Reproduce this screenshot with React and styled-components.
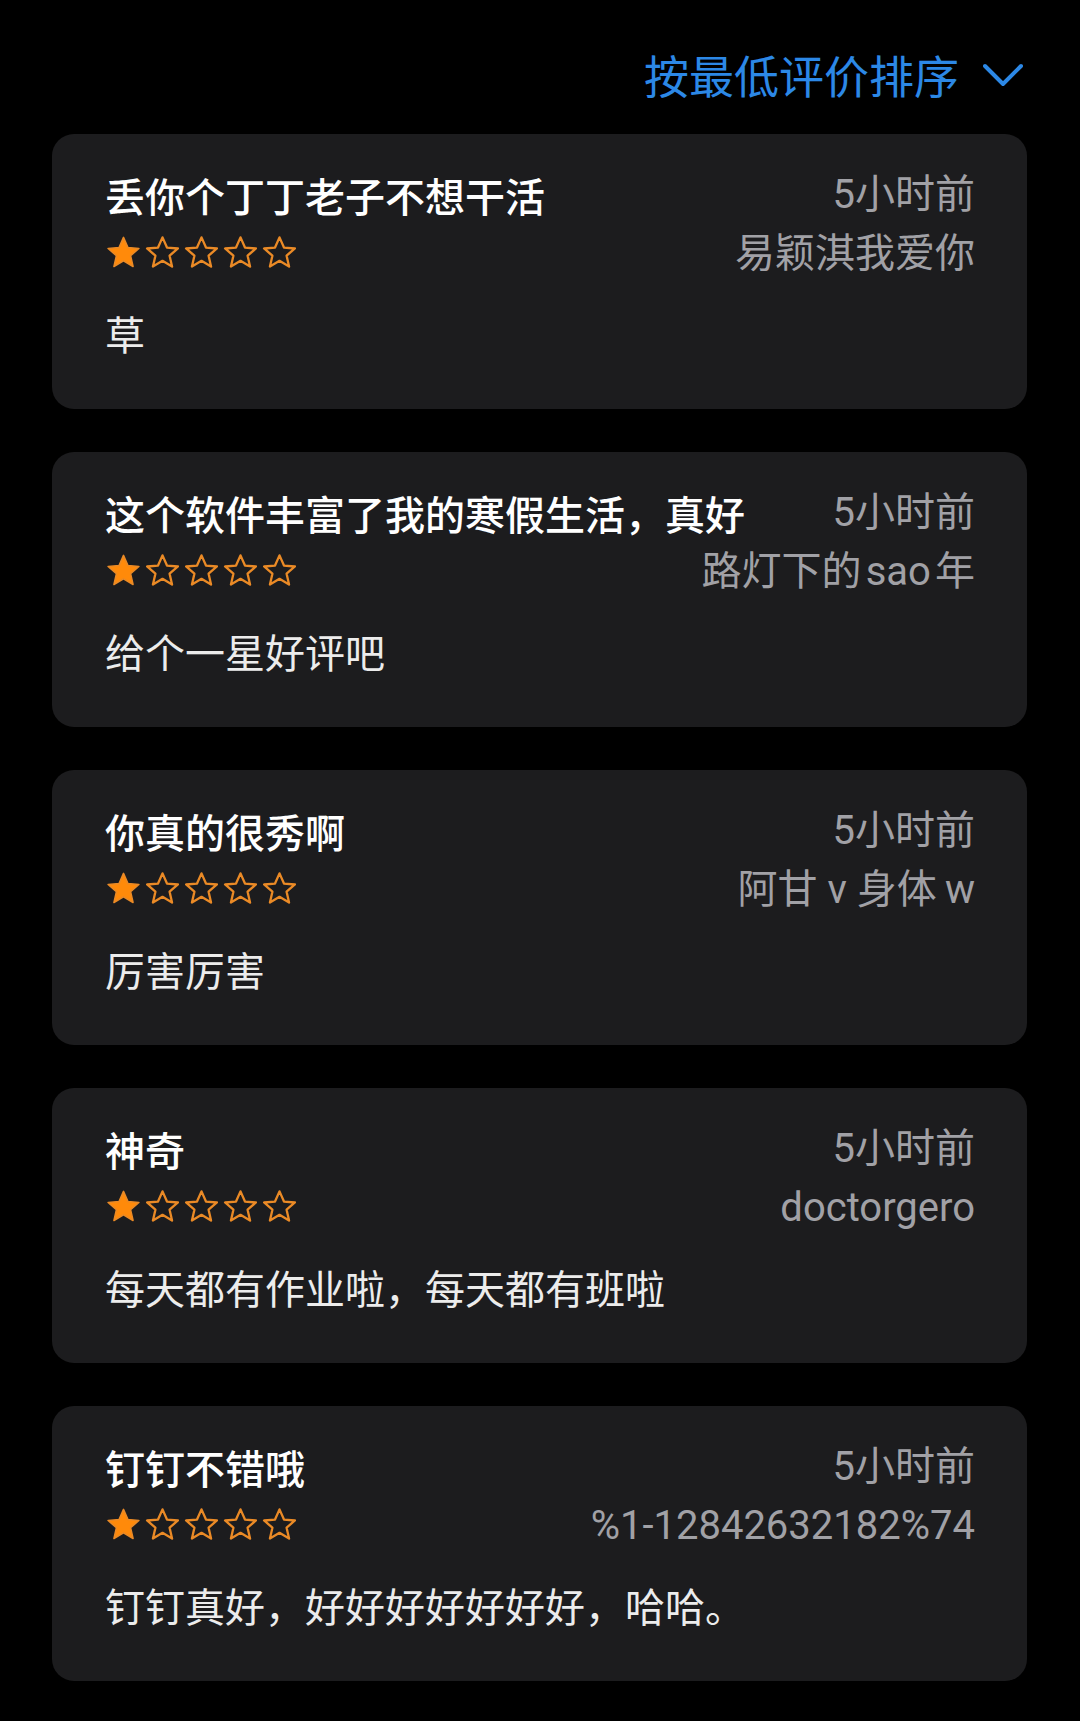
import React from "react";
import styled, { createGlobalStyle } from "styled-components";

const Global = createGlobalStyle`
  html, body { margin: 0; padding: 0; background: #000; }
  body { font-family: Roboto, "Noto Sans CJK SC", sans-serif; -webkit-font-smoothing: antialiased; }
`;

const Page = styled.div`
  background: #000;
  min-height: 1721px;
  padding: 53px 53px 0 52px;
  box-sizing: border-box;
  display: flex;
  flex-direction: column;
`;

const SortBar = styled.div`
  display: flex;
  justify-content: flex-end;
  align-items: center;
  gap: 24px;
  height: 44px;
  margin-bottom: 37px;
  padding-right: 4px;
  color: #2c88e6;
  font-family: "Noto Sans CJK SC", sans-serif;
  font-size: 45px;
  line-height: 44px;
`;

const List = styled.div`
  display: flex;
  flex-direction: column;
  gap: 43px;
`;

const Card = styled.div`
  background: #1c1c1e;
  border-radius: 22px;
  padding: 37px 52px 51px 53px;
  height: 275px;
  box-sizing: border-box;
`;

const Head = styled.div`
  display: grid;
  grid-template-columns: minmax(0, 1fr) auto;
  row-gap: 11px;
  align-items: center;
`;

const Title = styled.div`
  color: #fff;
  font-family: "Noto Sans CJK SC", sans-serif;
  font-weight: 500;
  font-size: 40px;
  line-height: 48px;
  white-space: nowrap;
`;

const Meta = styled.div`
  color: #a1a1a6;
  font-family: Roboto, "Noto Sans CJK SC", sans-serif;
  font-size: 40px;
  line-height: 48px;
  text-align: right;
  white-space: nowrap;
`;

const Stars = styled.div`
  display: flex;
  gap: 2px;
  height: 36px;
  align-items: center;
  margin-top: -4px;
`;

const Body = styled.div`
  margin-top: 31px;
  color: #ececec;
  font-family: "Noto Sans CJK SC", sans-serif;
  font-size: 40px;
  line-height: 48px;
  white-space: nowrap;
`;

const Star = ({ filled }) => (
  <svg width="37" height="37" viewBox="0 0 24 24">
    <path
      d="M12 2.2l2.9 6.6 7.1.6-5.4 4.7 1.6 7-6.2-3.7-6.2 3.7 1.6-7L2 9.4l7.1-.6z"
      fill={filled ? "#ff8a0a" : "none"}
      stroke="#ea8a26"
      strokeWidth={filled ? 1 : 1.5}
      strokeLinejoin="round"
    />
  </svg>
);

const Chevron = () => (
  <svg width="40" height="24" viewBox="0 0 40 24">
    <polyline points="2,3 20,21 38,3" fill="none" stroke="#2c88e6" strokeWidth="4" strokeLinecap="round" strokeLinejoin="round" />
  </svg>
);

const reviews = [
  { title: "丢你个丁丁老子不想干活", user: "易颖淇我爱你", body: "草" },
  { title: "这个软件丰富了我的寒假生活，真好", user: "路灯下的\u200asao\u200a年", body: "给个一星好评吧" },
  { title: "你真的很秀啊", user: "阿甘 v 身体\u2009w", body: "厉害厉害" },
  { title: "神奇", user: "doctorgero", body: "每天都有作业啦，每天都有班啦" },
  { title: "钉钉不错哦", user: "%1-12842632182%74", body: "钉钉真好，好好好好好好好，哈哈。" },
];

export default function App() {
  return (
    <>
      <Global />
      <Page>
        <SortBar>
          <span>按最低评价排序</span>
          <Chevron />
        </SortBar>
        <List>
          {reviews.map((r, i) => (
            <Card key={i}>
              <Head>
                <Title>{r.title}</Title>
                <Meta>5小时前</Meta>
                <Stars>
                  {[0, 1, 2, 3, 4].map((s) => (
                    <Star key={s} filled={s === 0} />
                  ))}
                </Stars>
                <Meta>{r.user}</Meta>
              </Head>
              <Body>{r.body}</Body>
            </Card>
          ))}
        </List>
      </Page>
    </>
  );
}
